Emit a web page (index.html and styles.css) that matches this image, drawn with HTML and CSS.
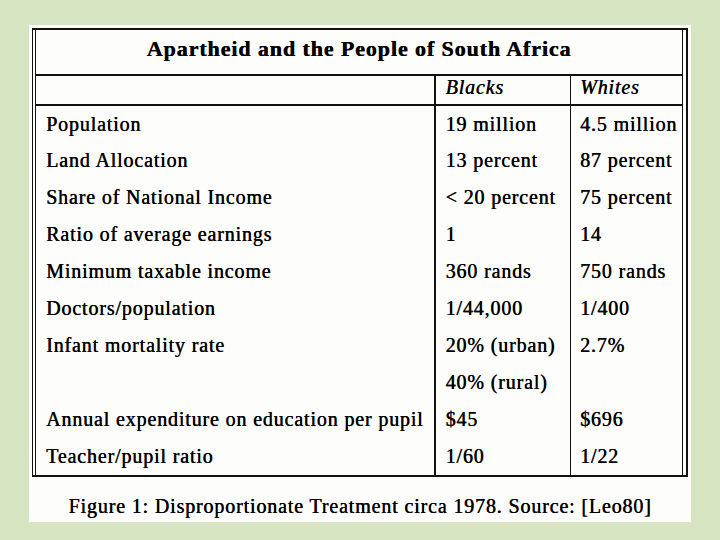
FILE: index.html
```html
<!DOCTYPE html>
<html>
<head>
<meta charset="utf-8">
<link rel="stylesheet" href="styles.css">
</head>
<body>
<div class="panel">
  <div class="frame">
    <table class="data">
      <colgroup><col class="w1"><col class="w2"><col class="w3"></colgroup>
      <tr class="title-row"><th colspan="3" class="title">Apartheid and the People of South Africa</th></tr>
      <tr class="head-row"><td class="c1"></td><td class="c2 it">Blacks</td><td class="c3 it">Whites</td></tr>
      <tr><td class="c1">Population</td><td class="c2">19 million</td><td class="c3">4.5 million</td></tr>
      <tr><td class="c1">Land Allocation</td><td class="c2">13 percent</td><td class="c3">87 percent</td></tr>
      <tr><td class="c1">Share of National Income</td><td class="c2">&lt; 20 percent</td><td class="c3">75 percent</td></tr>
      <tr><td class="c1">Ratio of average earnings</td><td class="c2">1</td><td class="c3">14</td></tr>
      <tr><td class="c1">Minimum taxable income</td><td class="c2">360 rands</td><td class="c3">750 rands</td></tr>
      <tr><td class="c1">Doctors/population</td><td class="c2">1/44,000</td><td class="c3">1/400</td></tr>
      <tr><td class="c1">Infant mortality rate</td><td class="c2">20% (urban)</td><td class="c3">2.7%</td></tr>
      <tr><td class="c1"></td><td class="c2">40% (rural)</td><td class="c3"></td></tr>
      <tr><td class="c1">Annual expenditure on education per pupil</td><td class="c2">$45</td><td class="c3">$696</td></tr>
      <tr><td class="c1">Teacher/pupil ratio</td><td class="c2">1/60</td><td class="c3">1/22</td></tr>
    </table>
  </div>
  <div class="caption">Figure 1: Disproportionate Treatment circa 1978. Source: [Leo80]</div>
</div>
</body>
</html>
```
FILE: styles.css
```css
html, body {
  margin: 0;
  padding: 0;
  background: #d7e4c2;
}
body {
  width: 720px;
  height: 540px;
  overflow: hidden;
  font-family: "Liberation Serif", "DejaVu Serif", serif;
  color: #000;
}
.panel {
  margin: 25px 0 0 29px;
  width: 662px;
  height: 497px;
  box-sizing: border-box;
  background: #fdfdfb;
  padding: 3px 3px 0 3px;
}
.frame {
  border-top: 2px solid #111;
  border-bottom: 2px solid #111;
  border-left: 1px solid #111;
  border-right: 2px solid #111;
  padding: 0 4px 0 2px;
}
.data {
  width: 648px;
  border-collapse: collapse;
  border-left: 1px solid #111;
  border-right: 1px solid #111;
  font-size: 20px;
  letter-spacing: 0.85px;
  table-layout: fixed;
  text-shadow: 0.4px 0 0 #000;
}
.w1 { width: 399px; }
.w2 { width: 136px; }
.w3 { width: auto; }
.data td, .data th {
  padding: 0 0 0 10px;
  text-align: left;
  white-space: nowrap;
  font-weight: normal;
  overflow: visible;
}
.data tr { height: 37px; }
.title-row { height: 45px !important; border-bottom: 2px solid #111; }
.head-row { height: 29px !important; border-bottom: 2px solid #111; }
.data th.title {
  text-align: center;
  font-weight: bold;
  font-size: 22px;
  letter-spacing: 0.9px;
  padding: 0 0 6px 0;
}
.head-row td { padding-bottom: 5px; }
.c1 { border-right: 2px solid #111; }
.c2 { border-right: 1px solid #111; }
.c3 { padding-left: 9px !important; }
.it { font-style: italic; }
.caption {
  margin-top: 18px;
  text-align: center;
  font-size: 20px;
  letter-spacing: 0.85px;
  text-shadow: 0.4px 0 0 #000;
}
```
